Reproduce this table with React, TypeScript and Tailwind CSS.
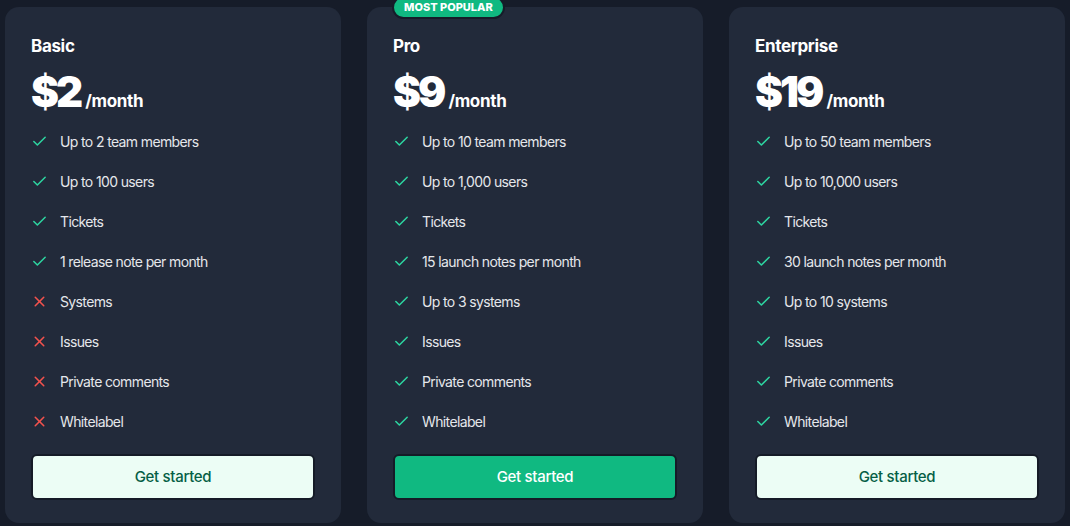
import { Check, X } from "lucide-react";

type Feature = { label: string; included: boolean };

type Plan = {
  name: string;
  price: string;
  popular?: boolean;
  features: Feature[];
};

const plans: Plan[] = [
  {
    name: "Basic",
    price: "$2",
    features: [
      { label: "Up to 2 team members", included: true },
      { label: "Up to 100 users", included: true },
      { label: "Tickets", included: true },
      { label: "1 release note per month", included: true },
      { label: "Systems", included: false },
      { label: "Issues", included: false },
      { label: "Private comments", included: false },
      { label: "Whitelabel", included: false },
    ],
  },
  {
    name: "Pro",
    price: "$9",
    popular: true,
    features: [
      { label: "Up to 10 team members", included: true },
      { label: "Up to 1,000 users", included: true },
      { label: "Tickets", included: true },
      { label: "15 launch notes per month", included: true },
      { label: "Up to 3 systems", included: true },
      { label: "Issues", included: true },
      { label: "Private comments", included: true },
      { label: "Whitelabel", included: true },
    ],
  },
  {
    name: "Enterprise",
    price: "$19",
    features: [
      { label: "Up to 50 team members", included: true },
      { label: "Up to 10,000 users", included: true },
      { label: "Tickets", included: true },
      { label: "30 launch notes per month", included: true },
      { label: "Up to 10 systems", included: true },
      { label: "Issues", included: true },
      { label: "Private comments", included: true },
      { label: "Whitelabel", included: true },
    ],
  },
];

function PlanCard({ plan }: { plan: Plan }) {
  return (
    <div className="relative flex-1 rounded-[14px] bg-[#222a3a] px-[26px] pt-[27px] pb-[26px]">
      {plan.popular && (
        <span className="absolute -top-[11px] left-[25px] rounded-full border-2 border-[#161c29] bg-[#10b981] px-[10px] py-[1px] text-[11px] font-extrabold text-white">
          MOST POPULAR
        </span>
      )}
      <h3 className="text-[17px] font-bold leading-6 tracking-[-0.02em] text-white">{plan.name}</h3>
      <div className="mt-[9px] flex items-baseline">
        <span className="text-[42px] font-black leading-[50px] tracking-[-0.07em] text-white">
          {plan.price}
        </span>
        <span className="ml-[5px] text-[17px] font-bold tracking-[-0.02em] text-white">/month</span>
      </div>
      <ul className="mt-[4px] flex flex-col">
        {plan.features.map((f) => (
          <li key={f.label} className="flex h-[40px] items-center gap-[12px]">
            {f.included ? (
              <Check className="h-[17px] w-[17px] text-[#2dd4a0]" strokeWidth={2.2} />
            ) : (
              <X className="h-[17px] w-[17px] text-[#f4524d]" strokeWidth={2.2} />
            )}
            <span className="text-[14px] tracking-[-0.045em] text-[#e5e7eb]">{f.label}</span>
          </li>
        ))}
      </ul>
      <button
        className={
          plan.popular
            ? "mt-[13px] h-[46px] w-full rounded-[6px] border-2 border-[#151b27] bg-[#10b981] text-[15px] font-medium tracking-[-0.02em] text-white"
            : "mt-[13px] h-[46px] w-full rounded-[6px] border-2 border-[#151b27] bg-[#ecfdf5] text-[15px] font-medium tracking-[-0.02em] text-[#065f46]"
        }
      >
        Get started
      </button>
    </div>
  );
}

export default function App() {
  return (
    <div
      className="flex h-[526px] w-[1070px] gap-[26px] bg-[#161c29] px-[5px] pt-[7px] pb-[3px]"
      style={{ fontFamily: "Inter, 'Noto Sans', sans-serif" }}
    >
      {plans.map((plan) => (
        <PlanCard key={plan.name} plan={plan} />
      ))}
    </div>
  );
}
